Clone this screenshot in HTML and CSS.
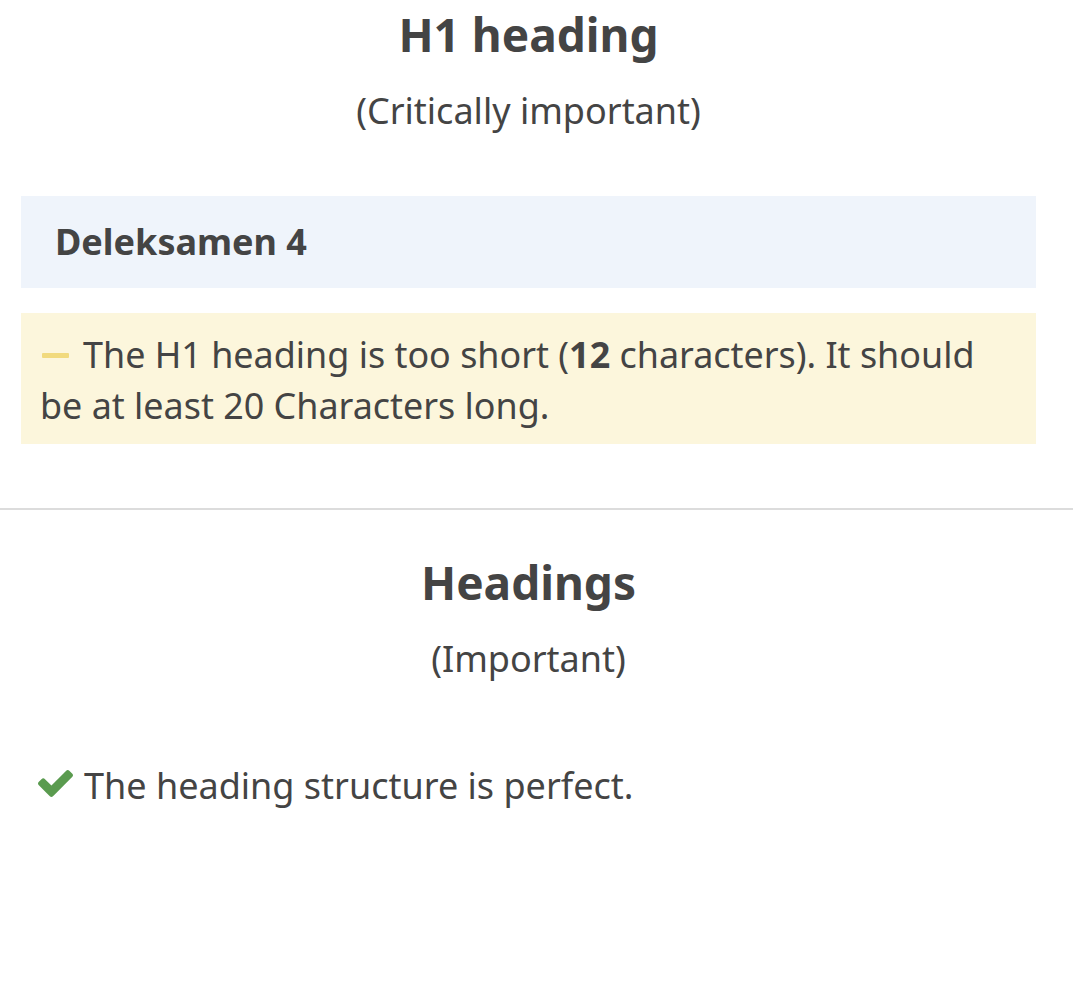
FILE: index.html
```html
<!DOCTYPE html>
<html lang="en">
<head>
<meta charset="utf-8">
<title>SEO check</title>
<link rel="stylesheet" href="styles.css">
</head>
<body>
<main class="page">
  <section class="section">
    <h2 class="title">H1 heading</h2>
    <p class="subtitle">(Critically important)</p>
    <div class="value-box">Deleksamen 4</div>
    <div class="notice notice-warn"><span class="dash" aria-hidden="true"></span>The H1 heading is too short (<b>12</b> characters). It should be at least 20 Characters long.</div>
  </section>
  <hr class="divider">
  <section class="section">
    <h2 class="title title-second">Headings</h2>
    <p class="subtitle">(Important)</p>
    <div class="result"><svg class="check" width="35" height="27" viewBox="121 334 1550 1188" aria-hidden="true"><path d="M1671 566q0 40-28 68l-724 724-136 136q-28 28-68 28t-68-28l-136-136-362-362q-28-28-28-68t28-68l136-136q28-28 68-28t68 28l294 295 656-657q28-28 68-28t68 28l136 136q28 28 28 68z"/></svg>The heading structure is perfect.</div>
  </section>
</main>
</body>
</html>
```

FILE: styles.css
```css
html, body {
  margin: 0;
  padding: 0;
  background: #ffffff;
}

body {
  font-family: "Noto Sans", "Open Sans", sans-serif;
  color: #444444;
  font-size: 36px;
}

.page {
  padding: 0 44px 0 21px;
}

.title {
  margin: 3px 0 0;
  font-size: 46px;
  line-height: 62px;
  font-weight: 700;
  text-align: center;
  color: #444444;
}

.title-second {
  margin-top: 41px;
}

.subtitle {
  margin: 21px 0 0;
  font-size: 36px;
  line-height: 50px;
  text-align: center;
}

.value-box {
  margin-top: 60px;
  background: #eff4fb;
  padding: 21px 34px 22px;
  font-weight: 700;
  line-height: 49px;
}

.notice {
  margin-top: 25px;
  padding: 16px 19px 13px;
  font-size: 35.9px;
  line-height: 51px;
}

.notice-warn {
  background: #fcf6dc;
}

.notice b {
  font-weight: 700;
}

.dash {
  display: inline-block;
  width: 27px;
  height: 5px;
  border-radius: 1px;
  background: #f1da7e;
  margin: 0 14px 0 2px;
  vertical-align: 10.5px;
}

.divider {
  border: 0;
  height: 2px;
  background: #dcdcdc;
  margin: 64px -37px 0 -21px;
}

.result {
  margin-top: 76px;
  padding-left: 17px;
  line-height: 51px;
}

.check {
  display: inline-block;
  vertical-align: 2px;
  margin-right: 11px;
  fill: #5a9b4f;
}
```
